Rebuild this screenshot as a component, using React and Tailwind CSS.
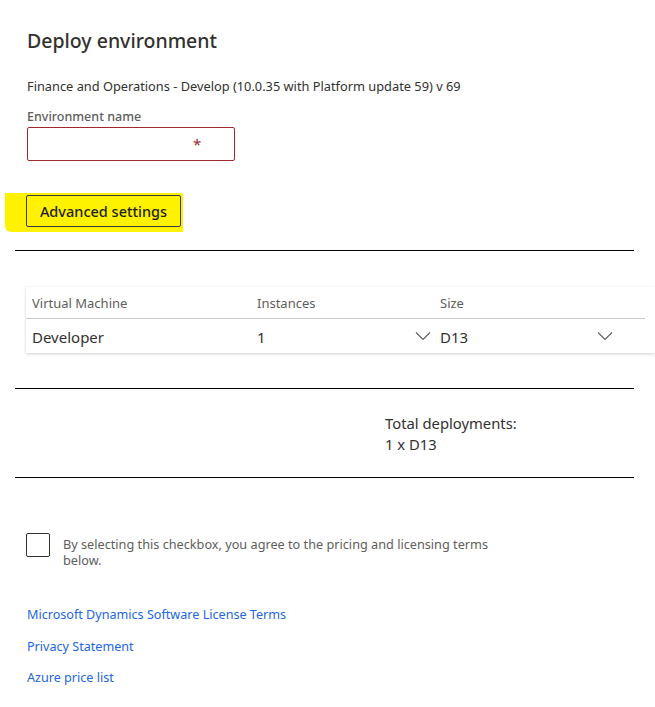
const font = { fontFamily: '"Noto Sans", "Open Sans", sans-serif' }

function Chevron() {
  return (
    <svg width="16" height="10" viewBox="0 0 16 10" className="shrink-0">
      <path d="M1 1.5 L8 8.5 L15 1.5" fill="none" stroke="#605e5c" strokeWidth="1.1" />
    </svg>
  )
}

export default function App() {
  return (
    <div
      className="w-[655px] h-[707px] bg-white overflow-hidden text-[#323130]"
      style={font}
    >
      <div className="pl-[27px] pt-[27px]">
        <h1 className="text-[19.5px] leading-[28px] font-medium text-[#323130]">Deploy environment</h1>
        <p className="mt-[23px] text-[12.8px] leading-[16px] text-[#323130]">
          Finance and Operations - Develop (10.0.35 with Platform update 59) v 69
        </p>
        <label className="block mt-[15px] text-[12.5px] leading-[16px] font-medium text-[#605e5c]">
          Environment name
        </label>
        <div className="mt-[2px] w-[208px] h-[34px] border border-[#a4262c] rounded-[2px] relative">
          <span className="absolute left-[165px] top-[6px] text-[#a4262c] text-[15px] leading-[20px]">*</span>
        </div>
      </div>

      <div className="mt-[32px] ml-[5px] inline-block bg-[#fff200] pl-[21px] pr-[2px] pt-[2px] pb-[5px] rounded-bl-[6px] rounded-tr-[2px]">
        <button className="h-[32px] w-[155px] border border-[#3b3a39] rounded-[2px] text-[14.5px] leading-[20px] font-medium text-[#201f1e]">
          Advanced settings
        </button>
      </div>

      <div className="mt-[18px] ml-[15px] w-[619px] border-t border-black" />

      <div className="mt-[36px] ml-[26px] w-[629px] shadow-[0_1px_3px_rgba(0,0,0,0.18)] bg-white">
        <div className="grid grid-cols-[225px_183px_182px_1fr] h-[31px] items-center text-[13px] text-[#605e5c] pt-[2px]">
          <div className="pl-[6px]">Virtual Machine</div>
          <div className="pl-[6px]">Instances</div>
          <div className="pl-[6px]">Size</div>
          <div />
        </div>
        <div className="w-[619px] border-t border-[#c8c6c4]" />
        <div className="grid grid-cols-[225px_183px_182px_1fr] h-[34px] items-center text-[15px] text-[#323130]">
          <div className="pl-[6px] pt-[3px]">Developer</div>
          <div className="pl-[6px] flex items-center justify-between pr-[3px]">
            <span className="pt-[3px]">1</span>
            <Chevron />
          </div>
          <div className="pl-[6px] flex items-center justify-between pr-[3px]">
            <span className="pt-[3px]">D13</span>
            <Chevron />
          </div>
          <div />
        </div>
      </div>

      <div className="mt-[35px] ml-[15px] w-[619px] border-t border-black" />

      <div className="ml-[385px] mt-[24px] text-[14.8px] leading-[20px] text-[#323130]">
        <div>Total deployments:</div>
        <div className="mt-[1px]">1 x D13</div>
      </div>

      <div className="mt-[23px] ml-[15px] w-[619px] border-t border-black" />

      <div className="mt-[55px] ml-[26px] flex items-start gap-[13px]">
        <div className="w-[24px] h-[24px] border border-[#323130] rounded-[2px] shrink-0" />
        <p className="text-[12.7px] leading-[16px] text-[#605e5c] w-[440px] pt-[3px]">
          By selecting this checkbox, you agree to the pricing and licensing terms below.
        </p>
      </div>

      <div className="mt-[39px] ml-[27px] flex flex-col gap-[15.5px] text-[12.6px] leading-[16px] text-[#2266e3]">
        <a href="#">Microsoft Dynamics Software License Terms</a>
        <a href="#">Privacy Statement</a>
        <a href="#">Azure price list</a>
      </div>
    </div>
  )
}
